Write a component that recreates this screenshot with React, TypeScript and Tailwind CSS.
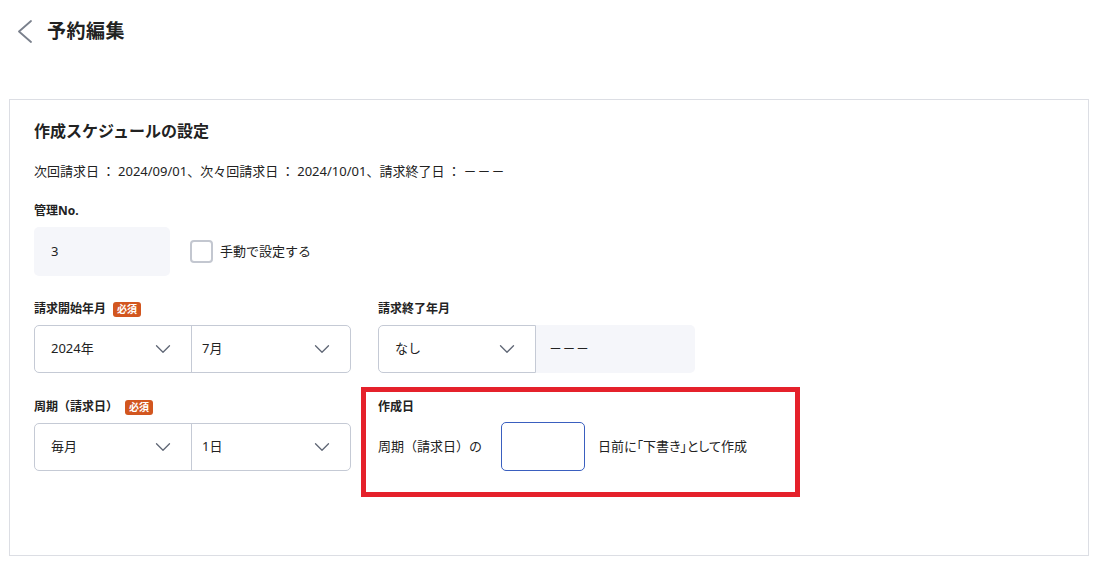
import { ChevronDown } from "lucide-react";

const FONT = { fontFamily: '"Noto Sans", "Noto Sans CJK JP", sans-serif' };

function RequiredBadge() {
    return (
        <span className="inline-flex items-center justify-center h-[15px] px-[4px] rounded-[3px] bg-[#d2561f] text-white text-[10px] font-bold leading-none">
            必須
        </span>
    );
}

// full-width colon, padded so it takes the wide slot it has in the design
function Colon() {
    return <span className="font-['Noto_Sans_CJK_JP'] px-[3px]">：</span>;
}

function SelectCell({ value, className = "" }: { value: string; className?: string }) {
    return (
        <div className={`flex items-center justify-between h-full pr-[15px] ${className}`}>
            <span className="text-[13px] text-[#222]">{value}</span>
            <ChevronDown className="w-[26px] h-[26px] text-[#5f6675]" strokeWidth={1.2} />
        </div>
    );
}

export default function App() {
    return (
        <div className="w-[1105px] h-[568px] bg-white text-[#222]" style={FONT}>
            {/* Header */}
            <div className="flex items-center h-[64px] pl-[17px] pb-[2px]">
                <svg width="16" height="23" viewBox="0 0 16 23" fill="none" className="text-[#7a808c]">
                    <polyline points="14,1 2,11.5 14,22" stroke="currentColor" strokeWidth="1.8" strokeLinecap="round" strokeLinejoin="round" />
                </svg>
                <h1 className="ml-[14px] text-[19px] font-bold tracking-[0.5px]">予約編集</h1>
            </div>

            {/* Card */}
            <div className="mt-[35px] ml-[9px] w-[1080px] h-[457px] border border-[#dcdee4] pl-[24px] pt-[19px]">
                <h2 className="text-[16px] font-bold leading-[24px]">作成スケジュールの設定</h2>
                <p className="mt-[18px] text-[13px] leading-[20px]">
                    次回請求日<Colon />2024/09/01、次々回請求日<Colon />2024/10/01、請求終了日<Colon />
                    <span className="tracking-[1px]">－－－</span>
                </p>

                {/* 管理No. */}
                <div className="mt-[21px] text-[12px] font-bold leading-[18px]">管理No.</div>
                <div className="mt-[7px] flex items-center">
                    <div className="w-[136px] h-[49px] rounded-[5px] bg-[#f5f6fa] flex items-center pl-[17px] text-[13px]">
                        3
                    </div>
                    <div className="ml-[20px] w-[23px] h-[23px] rounded-[4px] border-2 border-[#c3c7d0]" />
                    <span className="ml-[7px] text-[13px]">手動で設定する</span>
                </div>

                {/* Row: 請求開始年月 / 請求終了年月 */}
                <div className="mt-[24px] flex gap-[27px]">
                    <div className="w-[317px]">
                        <div className="flex items-center gap-[7px] h-[18px]">
                            <span className="text-[12px] font-bold">請求開始年月</span>
                            <RequiredBadge />
                        </div>
                        <div className="mt-[7px] flex h-[48px] border border-[#c5cad5] rounded-[5px]">
                            <SelectCell value="2024年" className="w-[157px] pl-[16px] border-r border-[#c5cad5]" />
                            <SelectCell value="7月" className="flex-1 pl-[10px]" />
                        </div>
                    </div>
                    <div className="w-[317px]">
                        <div className="flex items-center h-[18px]">
                            <span className="text-[12px] font-bold">請求終了年月</span>
                        </div>
                        <div className="mt-[7px] flex h-[48px]">
                            <SelectCell value="なし" className="w-[158px] pl-[16px] border border-[#c5cad5] rounded-l-[5px]" />
                            <div className="flex-1 flex items-center pl-[13px] bg-[#f5f6fa] rounded-r-[5px] text-[13px]">
                                <span className="tracking-[0.5px]">－－－</span>
                            </div>
                        </div>
                    </div>
                </div>

                {/* Row: 周期 / 作成日 */}
                <div className="mt-[25px] flex gap-[27px]">
                    <div className="w-[317px]">
                        <div className="flex items-center gap-[7px] h-[18px]">
                            <span className="text-[12px] font-bold">周期（請求日）</span>
                            <RequiredBadge />
                        </div>
                        <div className="mt-[7px] flex h-[48px] border border-[#c5cad5] rounded-[5px]">
                            <SelectCell value="毎月" className="w-[157px] pl-[16px] border-r border-[#c5cad5]" />
                            <SelectCell value="1日" className="flex-1 pl-[10px]" />
                        </div>
                    </div>
                    <div className="relative">
                        {/* highlight annotation */}
                        <div className="absolute left-[-17px] top-[-11px] w-[439px] h-[110px] border-[5px] border-[#e5212b] pointer-events-none" />
                        <div className="flex items-center h-[18px]">
                            <span className="text-[12px] font-bold">作成日</span>
                        </div>
                        <div className="mt-[6px] flex items-center h-[49px]">
                            <span className="text-[13px]">周期（請求日）の</span>
                            <div className="ml-[19px] w-[84px] h-[49px] rounded-[5px] border border-[#3a5fbf]" />
                            <span className="ml-[13px] text-[13px] [font-feature-settings:'palt']">日前に「下書き」として作成</span>
                        </div>
                    </div>
                </div>
            </div>
        </div>
    );
}
